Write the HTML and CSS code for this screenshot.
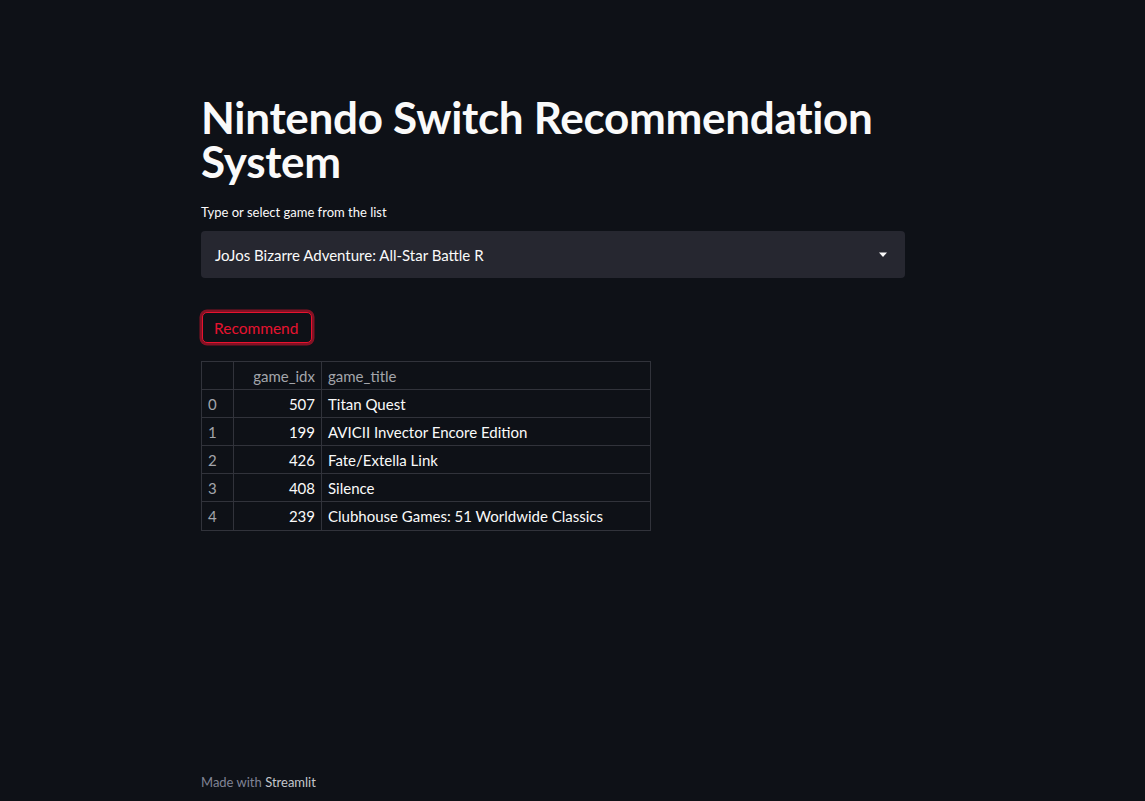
FILE: index.html
```html
<!DOCTYPE html>
<html>
<head>
<meta charset="utf-8">
<link rel="stylesheet" href="styles.css">
</head>
<body>
<div class="app">
  <main class="block">
    <h1 class="title">Nintendo Switch Recommendation System</h1>
    <div class="label">Type or select game from the list</div>
    <div class="select">
      <span class="select-value">JoJos Bizarre Adventure: All-Star Battle R</span>
      <svg class="caret" width="10" height="6" viewBox="0 0 10 6"><path d="M1 0.5h8L5 5z" fill="#fafafa"/></svg>
    </div>
    <div class="btn-row"><button class="btn">Recommend</button></div>
    <table class="df">
      <thead>
        <tr><th class="c-idx"></th><th class="c-num">game_idx</th><th class="c-title">game_title</th></tr>
      </thead>
      <tbody>
        <tr><td class="c-idx">0</td><td class="c-num">507</td><td class="c-title">Titan Quest</td></tr>
        <tr><td class="c-idx">1</td><td class="c-num">199</td><td class="c-title">AVICII Invector Encore Edition</td></tr>
        <tr><td class="c-idx">2</td><td class="c-num">426</td><td class="c-title">Fate/Extella Link</td></tr>
        <tr><td class="c-idx">3</td><td class="c-num">408</td><td class="c-title">Silence</td></tr>
        <tr><td class="c-idx">4</td><td class="c-num">239</td><td class="c-title">Clubhouse Games: 51 Worldwide Classics</td></tr>
      </tbody>
    </table>
  </main>
  <footer class="footer">Made with <span class="brand">Streamlit</span></footer>
</div>
</body>
</html>
```
FILE: styles.css
```css
* { box-sizing: border-box; }
html, body {
  margin: 0;
  padding: 0;
  background: #0e1117;
  color: #fafafa;
  font-family: "Lato", "Noto Sans", sans-serif;
}
.app {
  min-height: 801px;
  display: flex;
  flex-direction: column;
  padding-left: 201px;
}
.block {
  width: 704px;
  padding-top: 95px;
  flex: 1;
}
.title {
  margin: 0;
  font-size: 44px;
  line-height: 44px;
  font-weight: 700;
  letter-spacing: -0.3px;
}
.label {
  margin-top: 21px;
  font-size: 13px;
  line-height: 16px;
  color: #fafafa;
}
.select {
  margin-top: 11px;
  height: 47px;
  background: #262730;
  border-radius: 4px;
  display: flex;
  align-items: center;
  justify-content: space-between;
  padding: 0 17px 0 14px;
}
.select-value {
  font-size: 15px;
}
.caret { display: block; }
.btn-row {
  margin-top: 34px;
}
.btn {
  font-family: inherit;
  background: #0e1117;
  color: #e6132f;
  border: 1px solid #e6132f;
  border-radius: 5px;
  box-shadow: 0 0 0 2.5px rgba(230, 19, 47, 0.55);
  font-size: 15.5px;
  height: 31px;
  padding: 0 13px 0 11px;
  margin-left: 1px;
}
.df {
  margin-top: 18px;
  border-collapse: collapse;
  font-size: 15px;
  color: #fafafa;
}
.df th, .df td {
  border: 1px solid #31333b;
  height: 28px;
  padding: 0 6px;
  font-weight: 400;
  white-space: nowrap;
}
.df th { color: #a3a5ab; text-align: left; }
.df tbody tr:last-child td { height: 29px; }
.df .c-idx { width: 32px; color: #a3a5ab; }
.df .c-num { width: 88px; text-align: right; }
.df th.c-num { text-align: right; }
.df .c-title { width: 329px; text-align: left; }
.footer {
  padding: 0 0 11px 0;
  font-size: 13px;
  color: #808495;
}
.brand { color: #c4c6cc; }
```
